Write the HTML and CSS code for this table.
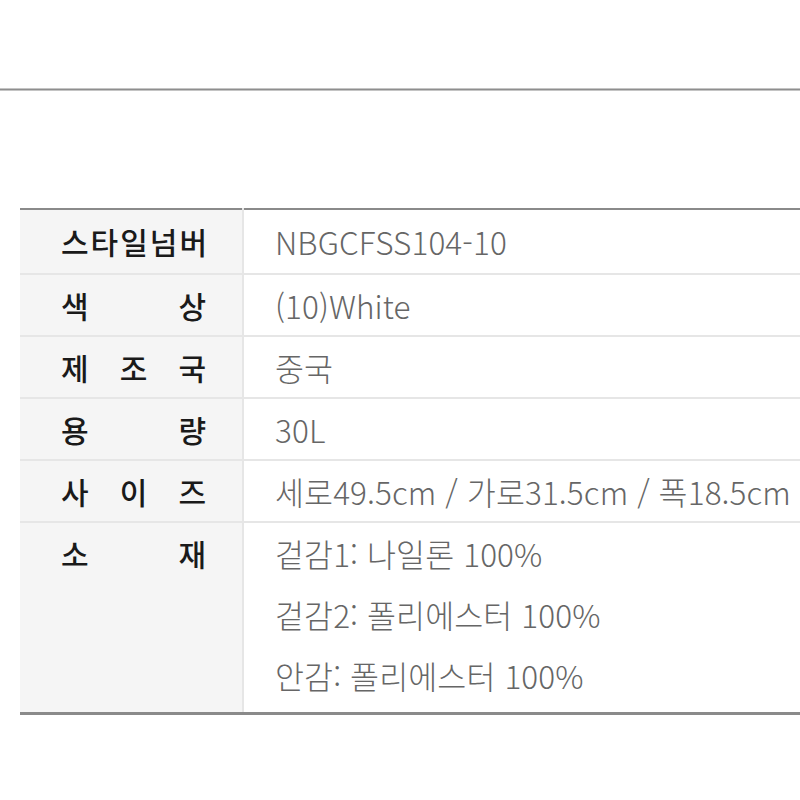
FILE: index.html
```html
<!DOCTYPE html>
<html lang="ko">
<head>
<meta charset="utf-8">
<link rel="stylesheet" href="styles.css">
</head>
<body>
<div class="rule"></div>
<table class="spec">
  <tr class="first">
    <th><span class="lbl wide">스타일넘버</span></th>
    <td>NBGCFSS104-10</td>
  </tr>
  <tr>
    <th><span class="lbl">색 상</span></th>
    <td>(10)White</td>
  </tr>
  <tr>
    <th><span class="lbl">제 조 국</span></th>
    <td>중국</td>
  </tr>
  <tr>
    <th><span class="lbl">용 량</span></th>
    <td>30L</td>
  </tr>
  <tr>
    <th><span class="lbl">사 이 즈</span></th>
    <td>세로49.5cm / 가로31.5cm / 폭18.5cm</td>
  </tr>
  <tr class="last">
    <th><span class="lbl">소 재</span></th>
    <td>
      <div class="line">겉감1: 나일론 100%</div>
      <div class="line">겉감2: 폴리에스터 100%</div>
      <div class="line">안감: 폴리에스터 100%</div>
    </td>
  </tr>
</table>
</body>
</html>
```

FILE: styles.css
```css
html, body {
  margin: 0;
  padding: 0;
  background: #ffffff;
  overflow: hidden;
}

body {
  font-family: "Noto Sans CJK KR", "Noto Sans", sans-serif;
  width: 800px;
  height: 800px;
}

.rule {
  margin-top: 88px;
  height: 1px;
  border-top: 1px solid #c4c4c4;
  border-bottom: 1px solid #c4c4c4;
  background: #8e8e8e;
}

.spec {
  margin-top: 117px;
  margin-left: 20px;
  width: 900px;
  border-collapse: collapse;
  border-top: 2px solid #8a8a8a;
  border-bottom: 3px solid #8a8a8a;
  table-layout: fixed;
}

.spec th {
  width: 223px;
  background: #f5f5f5;
  border-right: 2px solid #e6e6e6;
  border-bottom: 2px solid #e6e6e6;
  padding: 0 36px 0 41px;
  vertical-align: top;
  font-weight: 500;
  color: #1a1a1a;
  font-size: 30px;
  line-height: 60px;
  box-sizing: border-box;
  white-space: nowrap;
}

.lbl {
  display: block;
  text-align: justify;
  text-align-last: justify;
}

.lbl.wide {
  letter-spacing: 2px;
}

.spec td {
  background: #ffffff;
  border-bottom: 2px solid #e6e6e6;
  padding: 0 0 0 31px;
  vertical-align: top;
  font-weight: 300;
  color: #666666;
  font-size: 31.5px;
  letter-spacing: 0.1px;
  line-height: 60px;
  white-space: nowrap;
}

.spec tr.first th,
.spec tr.first td {
  line-height: 63px;
}

.spec tr.last th,
.spec tr.last td {
  border-bottom: none;
  padding-bottom: 6px;
  line-height: 61px;
}

.line {
  line-height: 61px;
}
```
